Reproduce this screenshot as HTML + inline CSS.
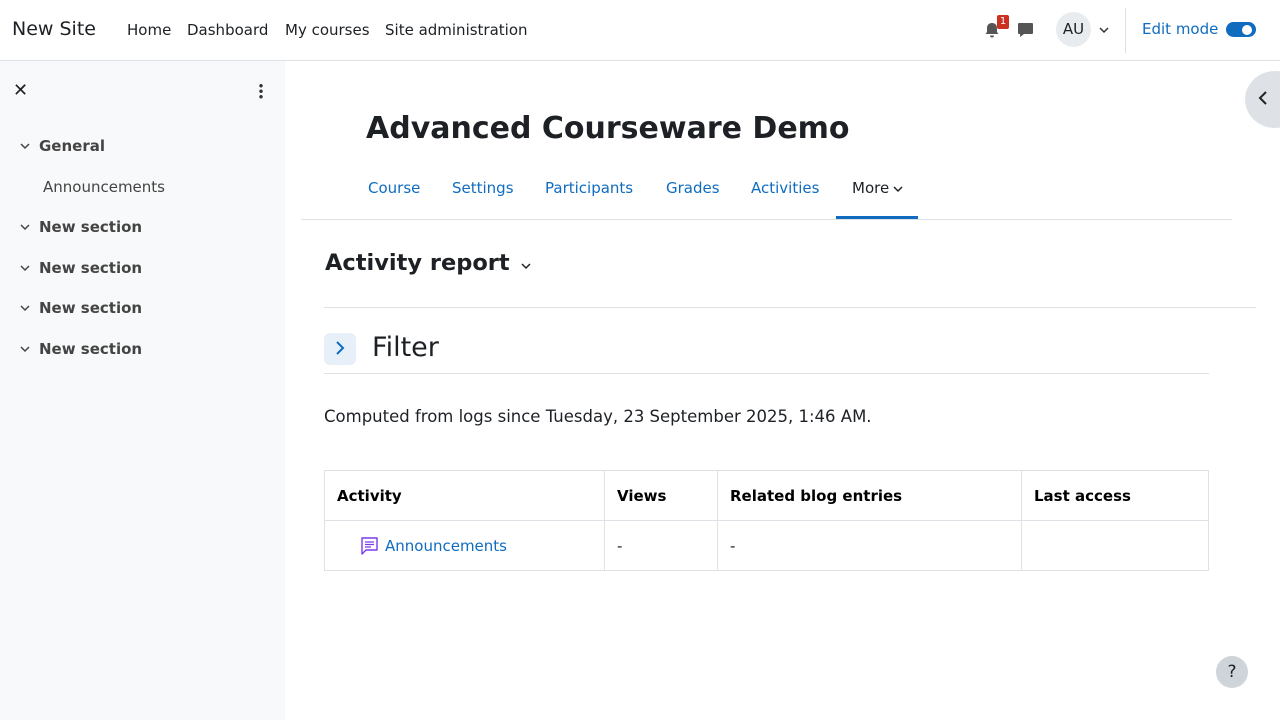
<!DOCTYPE html>
<html><head><meta charset="utf-8"><style>
*{margin:0;padding:0;box-sizing:border-box}
body{width:1280px;height:720px;overflow:hidden;font-family:"DejaVu Sans","Liberation Sans",sans-serif;font-size:15px;color:#1d2125;background:#fff;position:relative}
.a{position:absolute;white-space:nowrap}
.nav{top:0;left:0;width:1280px;height:61px;border-bottom:1px solid #dee2e6;background:#fff}
.side{top:61px;left:0;width:285px;height:659px;background:#f8f9fa}
.sec{font-weight:bold;color:#444;font-size:15px}
.link{color:#0f6cbf}
table{border-collapse:collapse;position:absolute;left:324px;top:470px;width:885px}
td,th{border:1px solid #dee2e6;text-align:left;padding:0 12px;height:50px;font-size:15px}
th{color:#000}
</style></head><body>
<div class="a nav"></div>
<div class="a" style="left:12px;top:18px;font-size:19px">New Site</div>
<div class="a" style="left:127px;top:21px">Home</div>
<div class="a" style="left:187px;top:21px">Dashboard</div>
<div class="a" style="left:285px;top:21px">My courses</div>
<div class="a" style="left:385px;top:21px">Site administration</div>
<svg class="a" style="left:984px;top:22px" width="16" height="16" viewBox="0 0 16 16"><path d="M8 1c-3 0-5 2-5 5v4l-1.5 2h13L13 10V6c0-3-2-5-5-5zM6 13.5a2 2 0 0 0 4 0z" fill="#555"/></svg>
<div class="a" style="left:997px;top:15px;width:12px;height:14px;background:#ca3120;color:#fff;font-size:10px;text-align:center;line-height:14px;border-radius:2px">1</div>
<svg class="a" style="left:1017px;top:22px" width="17" height="16" viewBox="0 0 17 16"><path d="M2 1h13a1 1 0 0 1 1 1v9a1 1 0 0 1-1 1H7l-4 3v-3H2a1 1 0 0 1-1-1V2a1 1 0 0 1 1-1z" fill="#555"/></svg>
<div class="a" style="left:1056px;top:12px;width:35px;height:35px;border-radius:50%;background:#e9ecef;text-align:center;line-height:35px;font-size:15px">AU</div>
<svg class="a" style="left:1099px;top:26px" width="10" height="8"><path d="M1 2l4 4 4-4" stroke="#333" stroke-width="1.5" fill="none"/></svg>
<div class="a" style="left:1125px;top:8px;width:1px;height:45px;background:#dee2e6"></div>
<div class="a link" style="left:1142px;top:20px">Edit mode</div>
<div class="a" style="left:1226px;top:22px;width:30px;height:15px;border-radius:8px;background:#0f6cbf"></div>
<div class="a" style="left:1242px;top:25px;width:10px;height:10px;border-radius:50%;background:#fff"></div>

<div class="a side"></div>
<div class="a" style="left:13px;top:80px;font-size:18px">✕</div>
<div class="a" style="left:259px;top:83px;width:4px;height:16px;background:radial-gradient(circle,#333 1.5px,transparent 2px) 0 0/4px 5.5px"></div>
<svg class="a" style="left:20px;top:142px" width="10" height="8"><path d="M1 2l4 4 4-4" stroke="#444" stroke-width="1.5" fill="none"/></svg>
<div class="a sec" style="left:39px;top:137px">General</div>
<div class="a" style="left:43px;top:178px;color:#444">Announcements</div>
<svg class="a" style="left:20px;top:223px" width="10" height="8"><path d="M1 2l4 4 4-4" stroke="#444" stroke-width="1.5" fill="none"/></svg>
<div class="a sec" style="left:39px;top:218px">New section</div>
<svg class="a" style="left:20px;top:264px" width="10" height="8"><path d="M1 2l4 4 4-4" stroke="#444" stroke-width="1.5" fill="none"/></svg>
<div class="a sec" style="left:39px;top:259px">New section</div>
<svg class="a" style="left:20px;top:304px" width="10" height="8"><path d="M1 2l4 4 4-4" stroke="#444" stroke-width="1.5" fill="none"/></svg>
<div class="a sec" style="left:39px;top:299px">New section</div>
<svg class="a" style="left:20px;top:345px" width="10" height="8"><path d="M1 2l4 4 4-4" stroke="#444" stroke-width="1.5" fill="none"/></svg>
<div class="a sec" style="left:39px;top:340px">New section</div>

<div class="a" style="left:1245px;top:71px;width:60px;height:57px;border-radius:50%;background:#dee2e6"></div>
<svg class="a" style="left:1258px;top:91px" width="10" height="14"><path d="M8 1L2 7l6 6" stroke="#222" stroke-width="2" fill="none"/></svg>

<div class="a" style="left:366px;top:111px;font-size:30px;font-weight:bold">Advanced Courseware Demo</div>
<div class="a link" style="left:368px;top:179px">Course</div>
<div class="a link" style="left:452px;top:179px">Settings</div>
<div class="a link" style="left:545px;top:179px">Participants</div>
<div class="a link" style="left:666px;top:179px">Grades</div>
<div class="a link" style="left:751px;top:179px">Activities</div>
<div class="a" style="left:852px;top:179px">More</div>
<svg class="a" style="left:893px;top:185px" width="10" height="8"><path d="M1 2l4 4 4-4" stroke="#222" stroke-width="1.5" fill="none"/></svg>
<div class="a" style="left:836px;top:216px;width:82px;height:3px;background:#0f6cbf"></div>
<div class="a" style="left:301px;top:219px;width:931px;height:1px;background:#dee2e6"></div>

<div class="a" style="left:325px;top:250px;font-size:22.5px;font-weight:bold">Activity report</div>
<svg class="a" style="left:521px;top:262px" width="10" height="8"><path d="M1 2l4 4 4-4" stroke="#222" stroke-width="1.5" fill="none"/></svg>
<div class="a" style="left:324px;top:307px;width:932px;height:1px;background:#dee2e6"></div>
<div class="a" style="left:324px;top:333px;width:32px;height:32px;border-radius:6px;background:#e7f0f9"></div>
<svg class="a" style="left:335px;top:341px" width="10" height="14"><path d="M2 1l6 6-6 6" stroke="#0f6cbf" stroke-width="2" fill="none"/></svg>
<div class="a" style="left:372px;top:332px;font-size:27px">Filter</div>
<div class="a" style="left:324px;top:373px;width:885px;height:1px;background:#dee2e6"></div>
<div class="a" style="left:324px;top:407px;font-size:16.5px">Computed from logs since Tuesday, 23 September 2025, 1:46 AM.</div>

<table>
<tr><th style="width:280px">Activity</th><th style="width:113px">Views</th><th style="width:304px">Related blog entries</th><th>Last access</th></tr>
<tr><td style="padding-left:35px"><svg width="19" height="19" viewBox="0 0 19 19" style="vertical-align:-4px;margin-right:6px"><path d="M2 2h15v12H6l-4 4z" stroke="#7c3aed" stroke-width="1.4" fill="none" stroke-linejoin="round"/><path d="M5 6h9M5 8.5h9M5 11h6" stroke="#7c3aed" stroke-width="1.3"/></svg><span class="link">Announcements</span></td><td>-</td><td>-</td><td></td></tr>
</table>

<div class="a" style="left:1216px;top:656px;width:32px;height:32px;border-radius:50%;background:#ced4da;text-align:center;line-height:32px;font-size:17px">?</div>
</body></html>
